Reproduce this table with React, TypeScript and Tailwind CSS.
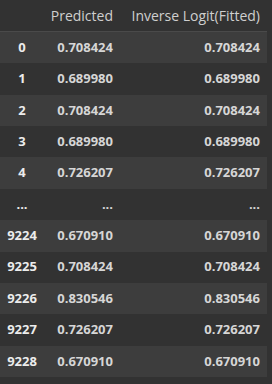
const ROWS: [string, string, string][] = [
  ["0", "0.708424", "0.708424"],
  ["1", "0.689980", "0.689980"],
  ["2", "0.708424", "0.708424"],
  ["3", "0.689980", "0.689980"],
  ["4", "0.726207", "0.726207"],
  ["...", "...", "..."],
  ["9224", "0.670910", "0.670910"],
  ["9225", "0.708424", "0.708424"],
  ["9226", "0.830546", "0.830546"],
  ["9227", "0.726207", "0.726207"],
  ["9228", "0.670910", "0.670910"],
];

export default function App() {
  return (
    <main className="h-[384px] w-[272px] overflow-hidden bg-[#323232] font-['Open_Sans',sans-serif]">
      <div className="w-[267px]">
        <div className="grid h-[32px] grid-cols-[44px_76px_1fr] items-center border-b border-[#4a4a4a] text-[14px] text-[#cfcfcf]">
          <span />
          <span className="pr-[7px] text-right">Predicted</span>
          <span className="pr-[7px] text-right">Inverse Logit(Fitted)</span>
        </div>

        {ROWS.map(([idx, predicted, fitted], i) => (
          <div
            key={idx}
            className={`grid h-[31.36px] grid-cols-[44px_76px_1fr] items-center text-[13px] font-bold ${
              i % 2 === 0 ? "bg-[#3d3d3d]" : "bg-[#323232]"
            }`}
          >
            <span className="text-center text-[#ececec]">{idx}</span>
            <span className="pr-[7px] text-right text-[#d6d6d6]">{predicted}</span>
            <span className="pr-[7px] text-right text-[#d6d6d6]">{fitted}</span>
          </div>
        ))}
      </div>
    </main>
  );
}
